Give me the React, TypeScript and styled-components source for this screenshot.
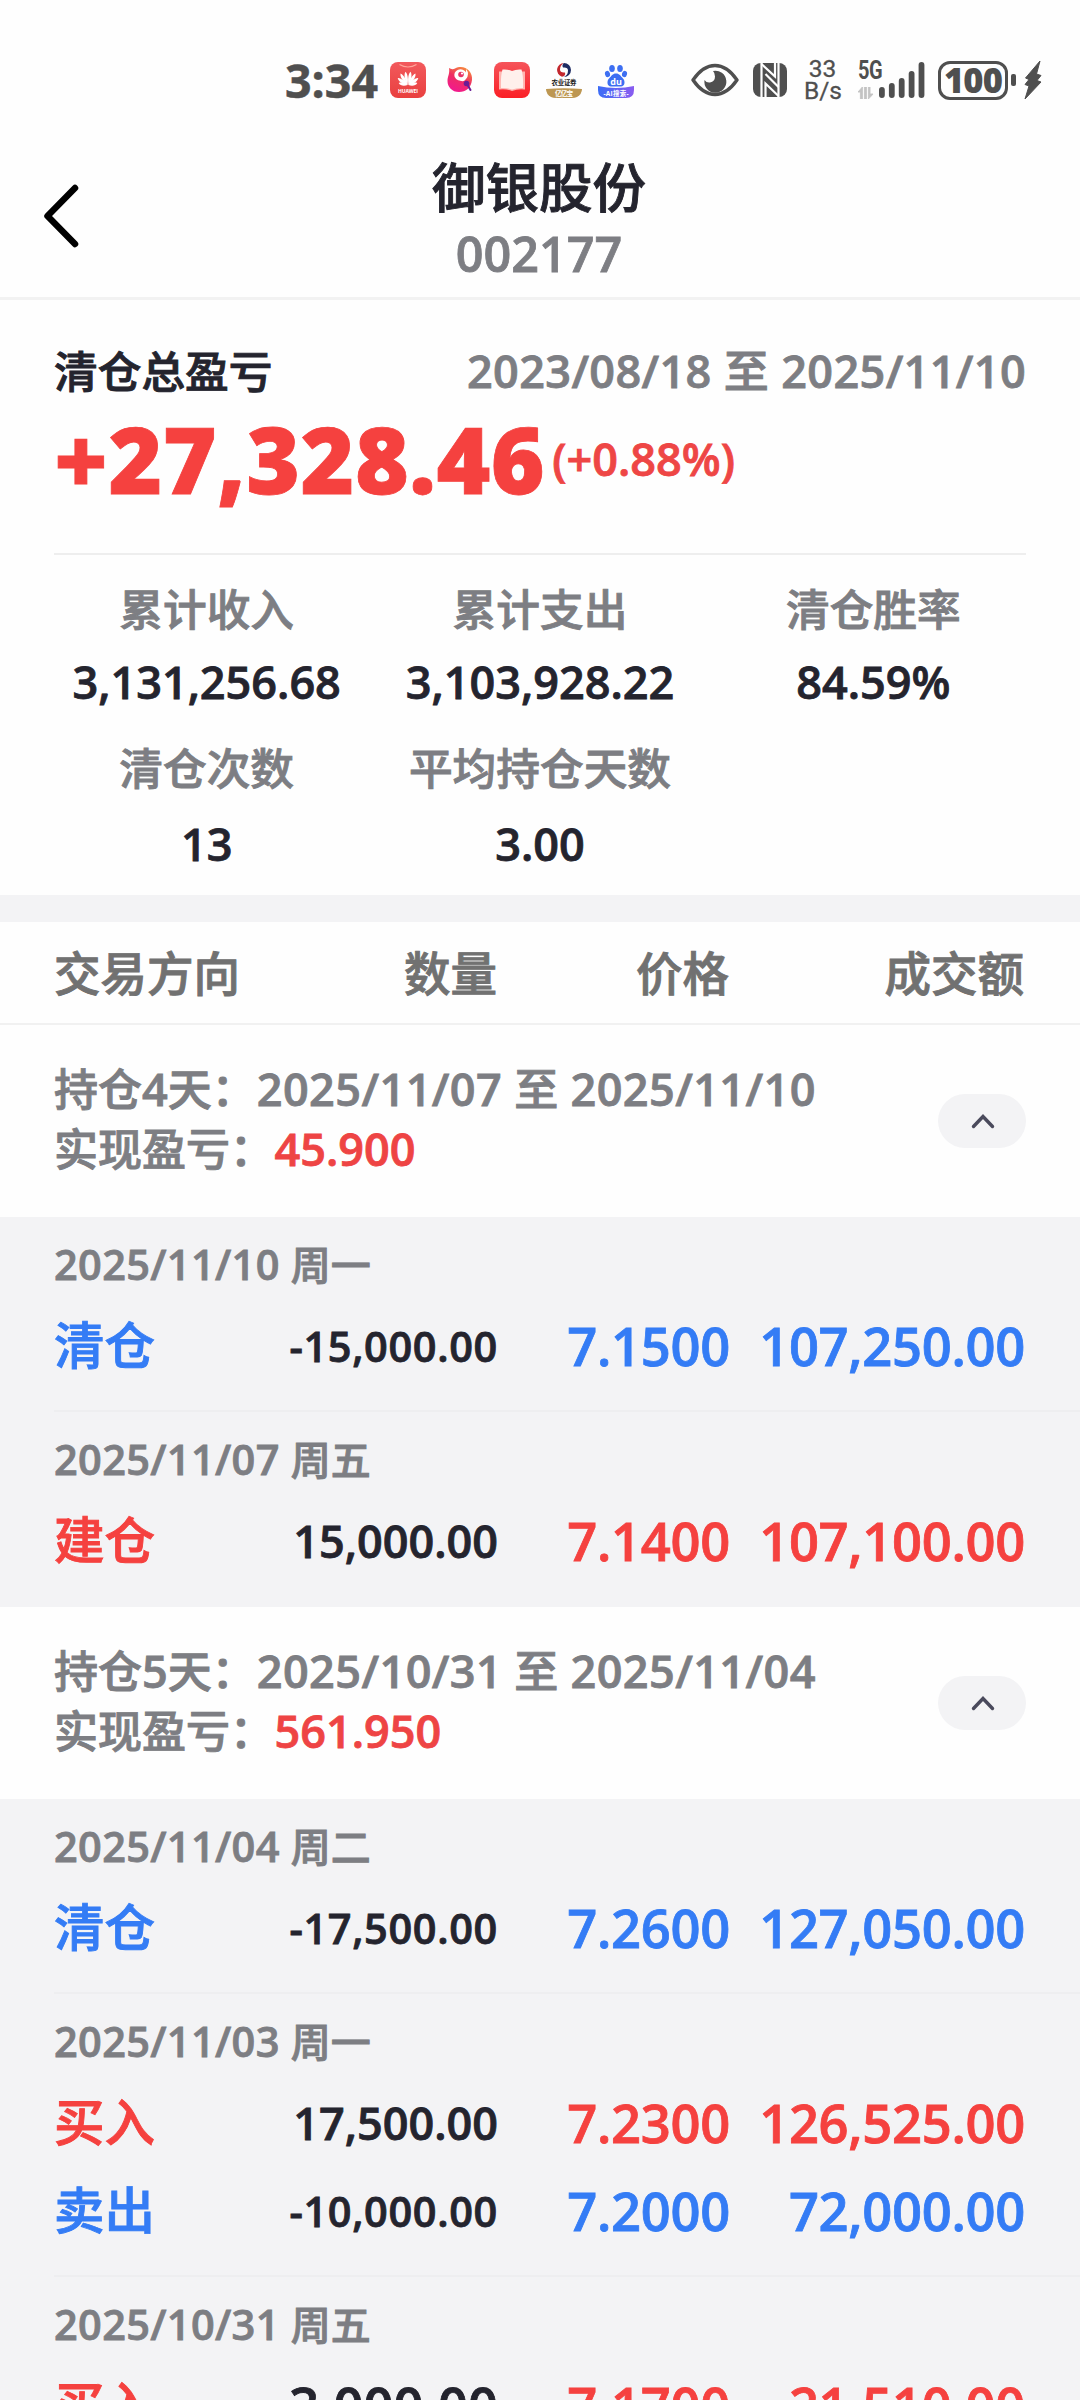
import { Fragment } from "react";
import styled, { createGlobalStyle } from "styled-components";

const RED = "#f5413f";
const BLUE = "#347cf5";
const INK = "#24242e";
const GRAY = "#7d7e83";
const BAND = "#f3f3f5";
const STATUS = "#4f4f4f";

const GlobalStyle = createGlobalStyle`
  * { box-sizing: border-box; }
  html, body { margin: 0; padding: 0; background: #fff; }
  body { overflow: hidden; }
`;

const Page = styled.main`
  width: 1080px;
  height: 2400px;
  overflow: hidden;
  background: #fefefe;
  color: ${INK};
  font-family: "Open Sans", "Noto Sans CJK SC", sans-serif;
  font-weight: 600;
  -webkit-text-stroke: 0.8px currentColor;
  white-space: nowrap;
  display: flex;
  flex-direction: column;
  > * { flex-shrink: 0; }
`;

const Cjk = styled.span`
  font-family: "Noto Sans CJK SC", sans-serif;
  font-weight: 500;
  -webkit-text-stroke: 0.9px currentColor;
`;

/* ---------- status bar ---------- */

const StatusBar = styled.div`
  height: 130px;
  padding: 30px 0 0 285px;
  display: flex;
  align-items: center;
  color: ${STATUS};
  -webkit-text-stroke: 0;
`;

const Clock = styled.div`
  width: 105px;
  font-size: 46.5px;
  font-weight: 700;
  line-height: 60px;
  -webkit-text-stroke: 0.5px currentColor;
`;

const Notifications = styled.div`
  display: flex;
  gap: 16px;
  width: 301px;
`;

const EyeSlot = styled.div`
  display: flex;
  width: 62px;
`;

const NfcSlot = styled.div`
  display: flex;
  width: 51px;
`;

const Speed = styled.div`
  width: 37px;
  font-family: Roboto, sans-serif;
  font-weight: 400;
  font-size: 24.5px;
  line-height: 22.5px;
  text-align: center;
  -webkit-text-stroke: 0.3px currentColor;
`;

const Signal = styled.div`
  display: grid;
  grid-template-columns: 21px 46px;
  margin-left: 17px;
  width: 80px;
  height: 38px;
  align-items: end;
`;

const Network = styled.div`
  display: flex;
  flex-direction: column;
  gap: 6px;
  font-family: Roboto, sans-serif;
  font-weight: 700;
  font-size: 25px;
  line-height: 20px;
  letter-spacing: -0.5px;
  transform: scaleX(0.8);
  transform-origin: left;
  svg { display: block; }
`;

const Battery = styled.div`
  width: 70px;
  height: 39px;
  border: 3px solid ${STATUS};
  border-radius: 12px;
  display: flex;
  justify-content: center;
  font-size: 34.5px;
  font-weight: 800;
  line-height: 31px;
  letter-spacing: -0.800px;
`;

const BatteryTip = styled.div`
  width: 5px;
  height: 12px;
  margin: 0 8px 0 3px;
  border-radius: 2px;
  background: ${STATUS};
`;

function HuaweiIcon() {
  const petals: [number, number][] = [[80, 9], [57, 12], [33, 13.5], [10.5, 13.5]];
  const petal = (len: number) =>
    `M18 23C16.600 ${23 - len * 0.3} 15.200 ${23 - len * 0.75} 17.500 ${23 - len}C20.300 ${23 - len * 0.8} 19.600 ${23 - len * 0.3} 18 23Z`;
  return (
    <svg width="36" height="36" viewBox="0 0 36 36">
      <defs>
        <linearGradient id="hw" x1="0" y1="0" x2="0" y2="1">
          <stop offset="0" stopColor="#f2595c" />
          <stop offset="1" stopColor="#e9403f" />
        </linearGradient>
      </defs>
      <rect width="36" height="36" rx="8" fill="url(#hw)" />
      <path d="M9.500 2.500Q18 7.500 26.500 2.500" fill="none" stroke="#ffa59a" strokeWidth="1.200" />
      {petals.map(([a, len]) => (
        <g key={a} fill="#fff">
          <path d={petal(len)} transform={`translate(0.500 0) rotate(${a} 18 23)`} />
          <path d={petal(len)} transform={`translate(35.500 0) scale(-1 1) rotate(${a} 18 23)`} />
        </g>
      ))}
      <text x="18" y="31" fontSize="5" fontWeight="700" fontFamily="Open Sans" fill="#fff" textAnchor="middle" textLength="20">HUAWEI</text>
    </svg>
  );
}

function BirdIcon() {
  return (
    <svg width="36" height="36" viewBox="0 0 36 36">
      <defs>
        <linearGradient id="bird" x1="0.700" y1="0" x2="0.200" y2="1">
          <stop offset="0" stopColor="#f78b3c" />
          <stop offset="0.450" stopColor="#ee2e63" />
          <stop offset="1" stopColor="#f21793" />
        </linearGradient>
      </defs>
      <path d="M7 6Q10 8 13 6.500C22 2 31 9 30 18C29 26 24 30 17 30C10 30 5.500 25 5.500 19C5.500 14 8 12 7 6Z" fill="url(#bird)" />
      <ellipse cx="18.500" cy="13" rx="6.200" ry="5.700" fill="#fff" />
      <path d="M24 7Q28 12 24 17Q21 21 18 18Q25 15 24 7Z" fill="#fff" />
      <circle cx="19" cy="12.500" r="2.800" fill="#e8356a" />
      <circle cx="20" cy="11.500" r="1.100" fill="#fff" />
      <circle cx="24.500" cy="21.500" r="2.800" fill="#6a1c96" />
      <path d="M25 22L28.500 28" stroke="#6a1c96" strokeWidth="2" strokeLinecap="round" />
    </svg>
  );
}

function BookIcon() {
  return (
    <svg width="36" height="36" viewBox="0 0 36 36">
      <defs>
        <linearGradient id="bk" x1="0" y1="0" x2="0" y2="1">
          <stop offset="0" stopColor="#f5545a" />
          <stop offset="1" stopColor="#fb1f26" />
        </linearGradient>
      </defs>
      <rect width="36" height="36" rx="8" fill="url(#bk)" />
      <path d="M5 9.500H31V27.500Q24 26.500 18 29Q12 26.500 5 27.500Z" fill="#ffb5b0" />
      <path d="M8.500 7.500Q14 7 18 9Q22 7 27.500 7.500Q29.500 14 29 26Q22 25.800 18 27.500Q14 25.800 7 26Q6.500 14 8.500 7.500Z" fill="#fff0ec" />
    </svg>
  );
}

function BrokerIcon() {
  return (
    <svg width="36" height="36" viewBox="0 0 36 36">
      <path d="M18 1A7 7 0 0 0 16 14.700Q20 14 19 10.500Q14 11 14 7.500Q14 3 18 1Z" fill="#c3282e" />
      <path d="M18 1Q15.500 3 17 5.500Q22 5 22 8.500Q22 13 18 15A7 7 0 0 0 18 1Z" fill="#1e2c63" />
      <text x="18" y="23.300" fontSize="6.400" fontWeight="700" fontFamily="Noto Sans CJK SC" fill="#222" textAnchor="middle" textLength="25">农业证券</text>
      <path d="M0 27Q18 25.500 36 27Q36 32 31 35Q29 36 26 36H10Q7 36 5 35Q0 32 0 27Z" fill="#bd9752" />
      <text x="18" y="33.600" fontSize="6.600" fontWeight="700" fontFamily="Noto Sans CJK SC" fill="#fff" textAnchor="middle" textLength="18">亿亿宝</text>
    </svg>
  );
}

function BaiduIcon() {
  return (
    <svg width="36" height="36" viewBox="0 0 36 36">
      <defs>
        <linearGradient id="bd" x1="0" y1="0" x2="1" y2="0">
          <stop offset="0" stopColor="#3b6cf6" />
          <stop offset="1" stopColor="#8a5cf0" />
        </linearGradient>
      </defs>
      <g fill="#3d6ff2">
        <ellipse cx="14" cy="6.500" rx="2.800" ry="3.500" />
        <ellipse cx="22" cy="6.500" rx="2.800" ry="3.500" />
        <ellipse cx="9.500" cy="12" rx="2.500" ry="3.200" transform="rotate(-15 9.500 12)" />
        <ellipse cx="26.500" cy="12" rx="2.500" ry="3.200" transform="rotate(15 26.500 12)" />
        <path d="M18 11.500C21.500 11.500 22.500 14 25 16.500C27.500 19 27 24.500 23 24.500H13C9 24.500 8.500 19 11 16.500C13.500 14 14.500 11.500 18 11.500Z" />
      </g>
      <text x="18" y="23" fontSize="9" fontWeight="700" fontFamily="Open Sans" fill="#fff" textAnchor="middle">du</text>
      <path d="M0 24Q18 28 36 24V28Q36 36 28 36H8Q0 36 0 28Z" fill="url(#bd)" />
      <text x="18" y="33.600" fontSize="6.500" fontWeight="700" fontFamily="Open Sans, Noto Sans CJK SC" fill="#fff" textAnchor="middle" textLength="25">-AI搜索-</text>
    </svg>
  );
}

function EyeIcon() {
  return (
    <svg width="48" height="34" viewBox="0 0 48 34">
      <path d="M2 17Q12 2.500 24 2.500Q36 2.500 46 17Q36 31.500 24 31.500Q12 31.500 2 17Z" fill="none" stroke={STATUS} strokeWidth="3.400" strokeLinejoin="round" />
      <path d="M22 8A11 11 0 1 1 13.500 17Q15.500 20 19 19.500Q24 18.500 24 13.500Q24 10 22 8Z" fill={STATUS} />
    </svg>
  );
}

function NfcIcon() {
  return (
    <svg width="34" height="34" viewBox="0 0 34 34">
      <rect width="34" height="34" rx="8" fill={STATUS} />
      <g fill="none" stroke="#fefefe" strokeWidth="2.200">
        <path d="M8.500 0V34M25.500 0V34" />
        <path d="M8.500 1L22 13.500V0M25.500 33L12.500 20.500V34" />
        <path d="M12.500 11L25.500 24" />
      </g>
    </svg>
  );
}

function SignalBars() {
  const heights = [11, 15, 20, 27, 36];
  return (
    <svg width="46" height="38" viewBox="0 0 46 38">
      {heights.map((h, i) => (
        <rect key={h} x={i * 9.9} y={37 - h} width="5.800" height={h} rx="2.900" fill={STATUS} />
      ))}
    </svg>
  );
}

function DataArrows() {
  return (
    <svg width="19" height="12" viewBox="0 0 19 12">
      <path d="M0 5L5.500 0V12H3V5ZM8 0H10.500V12H8ZM13 0H15V7H19L13 12Z" fill="#c4c4c4" stroke="#c4c4c4" />
    </svg>
  );
}

function Bolt() {
  return (
    <svg width="18" height="40" viewBox="0 0 18 40">
      <path d="M16 1L1.500 18L5 19.500L1 24.500L5 26L1 39L17 22L13 20.500L17 15.500L12.500 14Z" fill={STATUS} stroke={STATUS} strokeLinejoin="round" />
    </svg>
  );
}

/* ---------- title bar ---------- */

const TitleBar = styled.header`
  height: 170px;
  border-bottom: 3px solid #f2f2f2;
  display: grid;
  grid-template-columns: 120px 1fr 122px;
`;

const BackButton = styled.button`
  border: 0;
  padding: 52px 0 0 41px;
  background: none;
  display: flex;
  align-items: flex-start;
`;

const Titles = styled.div`
  padding-top: 20px;
  text-align: center;
`;

const Name = styled.h1`
  margin: 0;
  font-size: 53.500px;
  line-height: 70px;
  font-weight: 700;
`;

const Code = styled.div`
  margin-top: -1px;
  font-size: 48.500px;
  line-height: 62px;
  color: ${GRAY};
`;

/* ---------- summary ---------- */

const Summary = styled.section`
  height: 255px;
  margin: 0 54px;
  padding-top: 39px;
  border-bottom: 2px solid #eeeeee;
`;

const SummaryTop = styled.div`
  display: flex;
  justify-content: space-between;
  line-height: 60px;
  font-size: 45px;
`;

const SummaryLabel = styled.div`
  font-size: 43.700px;
`;

const Range = styled.div`
  color: ${GRAY};
  letter-spacing: 0.380px;
`;

const ProfitRow = styled.div`
  display: flex;
  align-items: center;
  height: 116px;
  color: ${RED};
`;

const Profit = styled.div`
  font-size: 92px;
  font-weight: 800;
  letter-spacing: 0.500px;
  line-height: 116px;
`;

const Percent = styled.div`
  margin-left: 7px;
  font-size: 45px;
  line-height: 116px;
  color: #ee4645;
`;

const Stats = styled.section`
  height: 340px;
  padding: 21px 40px 0;
  display: grid;
  grid-template-columns: repeat(3, 1fr);
  grid-template-rows: 159px 160px;
`;

const Stat = styled.div`
  text-align: center;
`;

const StatLabel = styled.div`
  font-size: 43.700px;
  line-height: 62px;
  color: ${GRAY};
`;

const StatValue = styled.div<{ $drop?: boolean }>`
  margin-top: ${(p) => (p.$drop ? 14 : 11)}px;
  font-size: 45px;
  line-height: 62px;
`;

const Band = styled.div`
  height: 27px;
  background: ${BAND};
`;

/* ---------- trades ---------- */

const COLS = "146px 298px 232px 295px";

const TableHead = styled.div`
  height: 103px;
  padding: 0 0 4px 54px;
  border-bottom: 2px solid #f1f1f1;
  display: grid;
  grid-template-columns: ${COLS};
  align-items: center;
  font-size: 46.500px;
  color: #717171;
`;

const HeadCell = styled.div<{ $end?: boolean }>`
  text-align: ${(p) => (p.$end ? "right" : "left")};
  padding-right: ${(p) => (p.$end ? 1 : 0)}px;
`;

const GroupHead = styled.div`
  height: 192px;
  padding: 2px 54px 8px;
  display: flex;
  justify-content: space-between;
  align-items: center;
  font-size: 45px;
  line-height: 59px;
  color: ${GRAY};
  ${Cjk} { font-size: 44px; letter-spacing: 0; }
`;

const Dates = styled.span`
  margin-left: 1px;
  letter-spacing: 0.450px;
`;

const Gain = styled.span`
  margin-left: 0.5px;
  color: #ee4444;
`;

const Toggle = styled.button`
  width: 88px;
  height: 54px;
  margin-top: 6px;
  padding: 0 0 0 2px;
  border: 0;
  border-radius: 27px;
  background: ${BAND};
  display: flex;
  align-items: center;
  justify-content: center;
`;

const Day = styled.section`
  background: ${BAND};
  padding: 18px 0 24px;
  position: relative;
  &:not(:last-child)::after {
    content: "";
    position: absolute;
    left: 54px;
    right: 0;
    bottom: 0;
    height: 2px;
    background: #eeeef0;
  }
`;

const DayDate = styled.div`
  padding-left: 54px;
  height: 65px;
  font-size: 41.500px;
  line-height: 56px;
  color: ${GRAY};
  letter-spacing: 0.350px;
  ${Cjk} { font-size: 40px; letter-spacing: 0; }
`;

const Trade = styled.div<{ $sell: boolean }>`
  height: 88px;
  padding-left: 54px;
  display: grid;
  grid-template-columns: ${COLS};
  align-items: center;
  font-size: 52.500px;
  line-height: 88px;
  letter-spacing: -0.300px;
  color: ${(p) => (p.$sell ? BLUE : RED)};
`;

const Side = styled.div`
  padding-bottom: 4px;
  font-size: 50.500px;
  line-height: 84px;
  letter-spacing: 0;
`;

/* Quantities shrink as they get longer so they stay inside their column. */
const qtySize = (length: number) => (length > 9 ? 41.5 : length > 8 ? 45 : 52.5);

const Qty = styled.div<{ $length: number }>`
  text-align: right;
  color: ${INK};
  font-size: ${(p) => qtySize(p.$length)}px;
  letter-spacing: ${(p) => (p.$length > 9 ? 0.65 : 0)}px;
`;

const Num = styled.div`
  text-align: right;
`;

type TradeRow = { side: string; sell: boolean; qty: string; price: string; amount: string };
type DayRow = { date: string; week: string; trades: TradeRow[] };
type Group = { days: string; from: string; to: string; gain: string; list: DayRow[] };

const groups: Group[] = [
  {
    days: "4", from: "2025/11/07", to: "2025/11/10", gain: "45.900",
    list: [
      { date: "2025/11/10", week: "周一", trades: [{ side: "清仓", sell: true, qty: "-15,000.00", price: "7.1500", amount: "107,250.00" }] },
      { date: "2025/11/07", week: "周五", trades: [{ side: "建仓", sell: false, qty: "15,000.00", price: "7.1400", amount: "107,100.00" }] },
    ],
  },
  {
    days: "5", from: "2025/10/31", to: "2025/11/04", gain: "561.950",
    list: [
      { date: "2025/11/04", week: "周二", trades: [{ side: "清仓", sell: true, qty: "-17,500.00", price: "7.2600", amount: "127,050.00" }] },
      {
        date: "2025/11/03", week: "周一", trades: [
          { side: "买入", sell: false, qty: "17,500.00", price: "7.2300", amount: "126,525.00" },
          { side: "卖出", sell: true, qty: "-10,000.00", price: "7.2000", amount: "72,000.00" },
        ],
      },
      { date: "2025/10/31", week: "周五", trades: [{ side: "买入", sell: false, qty: "3,000.00", price: "7.1700", amount: "21,510.00" }] },
    ],
  },
];

const stats = [
  ["累计收入", "3,131,256.68"],
  ["累计支出", "3,103,928.22"],
  ["清仓胜率", "84.59%"],
  ["清仓次数", "13"],
  ["平均持仓天数", "3.00"],
];

export default function App() {
  return (
    <Page>
      <GlobalStyle />
      <StatusBar>
        <Clock>3:34</Clock>
        <Notifications>
          <HuaweiIcon />
          <BirdIcon />
          <BookIcon />
          <BrokerIcon />
          <BaiduIcon />
        </Notifications>
        <EyeSlot><EyeIcon /></EyeSlot>
        <NfcSlot><NfcIcon /></NfcSlot>
        <Speed>33<br />B/s</Speed>
        <Signal>
          <Network>5G<DataArrows /></Network>
          <SignalBars />
        </Signal>
        <Battery>100</Battery>
        <BatteryTip />
        <Bolt />
      </StatusBar>

      <TitleBar>
        <BackButton aria-label="返回">
          <svg width="40" height="68" viewBox="0 0 40 68">
            <path d="M34 6L6.500 34L34 62" fill="none" stroke="#000" strokeWidth="6.500" strokeLinecap="round" strokeLinejoin="round" />
          </svg>
        </BackButton>
        <Titles>
          <Name><Cjk>御银股份</Cjk></Name>
          <Code>002177</Code>
        </Titles>
      </TitleBar>

      <Summary>
        <SummaryTop>
          <SummaryLabel><Cjk>清仓总盈亏</Cjk></SummaryLabel>
          <Range>2023/08/18 <Cjk>至</Cjk> 2025/11/10</Range>
        </SummaryTop>
        <ProfitRow>
          <Profit>+27,328.46</Profit>
          <Percent>(+0.88%)</Percent>
        </ProfitRow>
      </Summary>

      <Stats>
        {stats.map(([label, value], i) => (
          <Stat key={label}>
            <StatLabel><Cjk>{label}</Cjk></StatLabel>
            <StatValue $drop={i > 2}>{value}</StatValue>
          </Stat>
        ))}
      </Stats>

      <Band />

      <TableHead>
        <HeadCell><Cjk>交易方向</Cjk></HeadCell>
        <HeadCell $end><Cjk>数量</Cjk></HeadCell>
        <HeadCell $end><Cjk>价格</Cjk></HeadCell>
        <HeadCell $end><Cjk>成交额</Cjk></HeadCell>
      </TableHead>

      {groups.map((g) => (
        <Fragment key={g.from}>
          <GroupHead>
            <div>
              <div><Cjk>持仓</Cjk>{g.days}<Cjk>天：</Cjk><Dates>{g.from} <Cjk>至</Cjk> {g.to}</Dates></div>
              <div><Cjk>实现盈亏：</Cjk><Gain>{g.gain}</Gain></div>
            </div>
            <Toggle aria-label="收起">
              <svg width="24" height="16" viewBox="0 0 24 16">
                <path d="M2.500 13.500L12 3.500L21.500 13.500" fill="none" stroke="#4a4a5c" strokeWidth="3.400" strokeLinecap="round" />
              </svg>
            </Toggle>
          </GroupHead>
          <div>
            {g.list.map((d) => (
              <Day key={d.date}>
                <DayDate>{d.date} <Cjk>{d.week}</Cjk></DayDate>
                {d.trades.map((t) => (
                  <Trade key={t.price} $sell={t.sell}>
                    <Side><Cjk>{t.side}</Cjk></Side>
                    <Qty $length={t.qty.length}>{t.qty}</Qty>
                    <Num>{t.price}</Num>
                    <Num>{t.amount}</Num>
                  </Trade>
                ))}
              </Day>
            ))}
          </div>
        </Fragment>
      ))}
    </Page>
  );
}
